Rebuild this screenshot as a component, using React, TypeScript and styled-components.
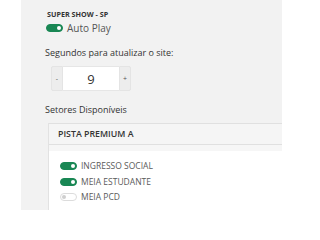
import React from "react";
import styled, { createGlobalStyle } from "styled-components";

const GlobalStyle = createGlobalStyle`
  html, body {
    margin: 0;
    padding: 0;
    background: #ffffff;
    font-family: "Open Sans", "Noto Sans", sans-serif;
  }
`;

const Page = styled.div`
  display: flex;
  width: 320px;
  height: 210px;
  overflow: hidden;
  padding-left: 21px;
  box-sizing: border-box;
`;

const Panel = styled.div`
  width: 261px;
  height: 210px;
  background: #f2f2f2;
  display: flex;
  flex-direction: column;
  padding: 9px 0 0 24px;
  box-sizing: border-box;
  color: #333;
`;

const EventName = styled.div`
  font-size: 7.2px;
  font-weight: 700;
  color: #333;
  margin-left: 2px;
  line-height: 10px;
`;

const ToggleRow = styled.label`
  display: flex;
  align-items: center;
  gap: 4px;
  font-size: 10px;
  color: #555;
  line-height: 12px;
`;

const Switch = styled.span<{ $on?: boolean }>`
  position: relative;
  width: 17px;
  height: 8px;
  border-radius: 5px;
  box-sizing: border-box;
  background: ${p => (p.$on ? "#198754" : "#ffffff")};
  border: 1px solid ${p => (p.$on ? "#198754" : "#dcdcdc")};
  flex: none;

  &::after {
    content: "";
    position: absolute;
    top: 1px;
    left: ${p => (p.$on ? "10px" : "1px")};
    width: 4px;
    height: 4px;
    border-radius: 50%;
    background: ${p => (p.$on ? "#ffffff" : "#cfcfcf")};
  }
`;

const Label = styled.div<{ $gap: number }>`
  font-size: 9px;
  color: #333;
  line-height: 12px;
  margin-top: ${p => p.$gap}px;
`;

const InputGroup = styled.div`
  display: flex;
  height: 25px;
  margin: 7px 0 0 6px;
`;

const StepButton = styled.button<{ $side: "left" | "right" }>`
  width: 12px;
  height: 25px;
  padding: 0;
  border: 1px solid #e4e4e4;
  background: #ededed;
  color: #555;
  font-size: 7px;
  font-family: inherit;
  border-radius: ${p => (p.$side === "left" ? "2px 0 0 2px" : "0 2px 2px 0")};
`;

const NumberField = styled.div`
  width: 56px;
  height: 25px;
  background: #fff;
  border-top: 1px solid #e6e6e6;
  border-bottom: 1px solid #e6e6e6;
  box-sizing: border-box;
  display: flex;
  align-items: center;
  justify-content: center;
  font-size: 13px;
  color: #333;
`;

const Card = styled.div`
  margin: 7px 0 0 3px;
  border-left: 1px solid #e2e2e2;
  flex: 1;
  display: flex;
  flex-direction: column;
`;

const CardHeader = styled.div`
  height: 22px;
  box-sizing: border-box;
  border-top: 1px solid #e0e0e0;
  border-bottom: 1px solid #e0e0e0;
  background: #f5f5f5;
  font-size: 8.8px;
  font-weight: 600;
  color: #333;
  display: flex;
  align-items: center;
  padding-left: 9px;
`;

const Band = styled.div`
  height: 6px;
  background: #f6f6f6;
`;

const OptionList = styled.div`
  flex: 1;
  width: calc(100% + 40px);
  background: #ffffff;
  display: flex;
  flex-direction: column;
  gap: 3.5px;
  padding: 9px 0 0 11px;
  box-sizing: border-box;
`;

const Option = styled(ToggleRow)`
  font-size: 8.5px;
  color: #5a5a5a;
`;

const ToggleGroup = styled(ToggleRow)`
  margin: 3px 0 0 1px;
`;

const options = [
  { name: "INGRESSO SOCIAL", on: true },
  { name: "MEIA ESTUDANTE", on: true },
  { name: "MEIA PCD", on: false },
];

export default function App() {
  return (
    <>
      <GlobalStyle />
      <Page>
        <Panel>
          <EventName>SUPER SHOW - SP</EventName>
          <ToggleGroup>
            <Switch $on />
            Auto Play
          </ToggleGroup>
          <Label $gap={13}>Segundos para atualizar o site:</Label>
          <InputGroup>
            <StepButton $side="left">-</StepButton>
            <NumberField>9</NumberField>
            <StepButton $side="right">+</StepButton>
          </InputGroup>
          <Label $gap={13}>Setores Disponíveis</Label>
          <Card>
            <CardHeader>PISTA PREMIUM A</CardHeader>
            <Band />
            <OptionList>
              {options.map(o => (
                <Option key={o.name}>
                  <Switch $on={o.on} />
                  {o.name}
                </Option>
              ))}
            </OptionList>
          </Card>
        </Panel>
      </Page>
    </>
  );
}
